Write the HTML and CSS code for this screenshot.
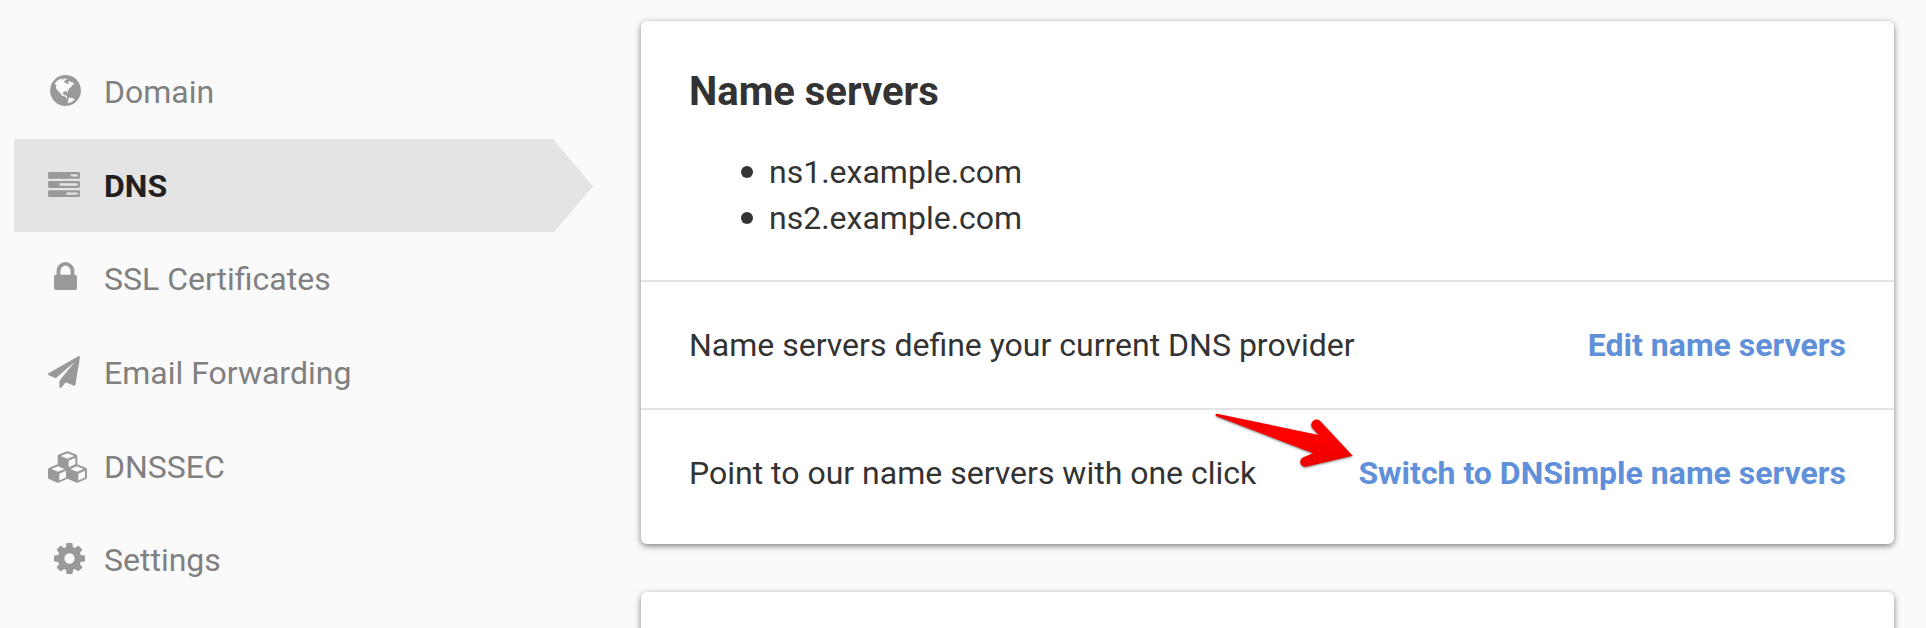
FILE: index.html
```html
<!DOCTYPE html>
<html lang="en">
<head>
<meta charset="utf-8">
<title>Name servers</title>
<link rel="stylesheet" href="styles.css">
</head>
<body>
<div class="page">
  <nav class="sidebar">
    <a class="item"><span class="slot"><svg class="icon globe" viewBox="128 128 1536 1536"><path d="M896 128q209 0 385.500 103t279.500 279.500 103 385.500-103 385.500-279.500 279.500-385.500 103-385.500-103-279.500-279.500-103-385.500 103-385.500 279.500-279.500 385.500-103zm274 521q-2 1-9.500 9.500t-13.500 9.500q2 0 4.500-5t5-11 3.500-7q6-7 22-15 14-6 52-12 34-8 51 11-2-2 9.500-13t14.500-12q3-2 15-4.500t15-7.500l2-22q-12 1-17.500-7t-6.500-21q0 2-6 8 0-7-4.500-8t-11.500 1-9 1q-10-3-15-7.500t-8-16.500-4-15q-2-5-9.500-11t-9.500-10q-1-2-2.500-5.500t-3-6.500-4-5.500-5.500-2.500-7 5-7.500 10-4.500 5q-3-2-6-1.500t-4.500 1-4.500 3-5 3.500q-3 2-8.500 3t-8.500 2q15-5-1-11-10-4-16-3 9-4 7.500-12t-8.500-14h5q-1-4-8.500-8.500t-17.500-8.500-13-6q-8-5-34-9.500t-33-.5q-5 6-4.500 10.500t4 14 3.500 12.500q1 6-5.500 13t-6.500 12q0 7 14 15.500t10 21.500q-3 8-16 16t-16 12q-5 8-1.500 18.500t10.500 16.500q2 2 1.500 4t-3.500 4.500-5.500 4-6.500 3.500l-3 2q-11 5-20.500-6t-13.500-26q-7-25-16-30-23-8-29 1-5-13-41-26-25-9-58-4 6-1 0-15-7-15-19-12 3-6 4-17.500t1-13.500q3-13 12-23 1-1 7-8.500t9.500-13.500.5-6q35 4 50-11 5-5 11.500-17t10.500-17q9-6 14-5.500t14.500 5.500 14.500 5q14 1 15.500-11t-7.500-20q12 1 3-17-4-7-8-9-12-4-27 5-8 4 2 8-1-1-9.500 10.500t-16.500 17.500-16-5q-1-1-5.500-13.500t-9.500-13.500q-8 0-16 15 3-8-11-15t-24-8q19-12-8-27-7-4-20.500-5t-19.500 4q-5 7-5.500 11.500t5 8 10.500 5.500 11.500 4 8.500 3q14 10 8 14-2 1-8.500 3.500t-11.500 4.500-6 4q-3 4 0 14t-2 14q-5-5-9-17.500t-7-16.500q7 9-25 6l-10-1q-4 0-16 2t-20.500 1-13.500-8q-4-8 0-20 1-4 4-2-4-3-11-9.500t-10-8.500q-46 15-94 41 6 1 12-1 5-2 13-6.500t10-5.500q34-14 42-7l5-5q14 16 20 25-7-4-30-1-20 6-22 12 7 12 5 18-4-3-11.500-10t-14.500-11-15-5q-16 0-22 1-146 80-235 222 7 7 12 8 4 1 5 9t2.500 11 11.500-3q9 8 3 19 1-1 44 27 19 17 21 21 3 11-10 18-1-2-9-9t-9-4q-3 5 .5 18.500t10.500 12.500q-7 0-9.500 16t-2.500 35.500-1 23.500l2 1q-3 12 5.500 34.500t21.500 19.500q-13 3 20 43 6 8 8 9 3 2 12 7.500t15 10 10 10.500q4 5 10 22.500t14 23.500q-2 6 9.500 20t10.500 23q-1 0-2.500 1t-2.500 1q3 7 15.500 14t15.500 13q1 3 2 10t3 11 8 2q2-20-24-62-15-25-17-29-3-5-5.500-15.500t-4.500-14.500q2 0 6 1.500t8.500 3.500 7.500 4 2 3q-3 7 2 17.500t12 18.500 17 19 12 13q6 6 14 19.500t0 13.500q9 0 20 10.500t17 19.500q5 8 8 26t5 24q2 7 8.500 13.500t12.500 9.500l16 8 13 7q5 2 18.500 10.500t21.500 11.500q10 4 16 4t14.500-2.500 13.500-3.500q15-2 29 15t21 21q36 19 55 11-2 1 .5 7.500t8 15.500 9 14.500 5.500 8.500q5 6 18 15t18 15q6-4 7-9-3 8 7 20t18 10q14-3 14-32-31 15-49-18 0-1-2.500-5.500t-4-8.500-2.500-8.500 0-7.500 5-3q9 0 10-3.500t-2-12.500-4-13q-1-8-11-20t-12-15q-5 9-16 8t-16-9q0 1-1.500 5.500t-1.500 6.500q-13 0-15-1 1-3 2.500-17.500t3.500-22.500q1-4 5.500-12t7.500-14.500 4-12.500-4.500-9.500-17.500-2.500q-19 1-26 20-1 3-3 10.500t-5 11.500-9 7q-7 3-24 2t-24-5q-13-8-22.500-29t-9.500-37q0-10 2.500-26.500t3-25-5.500-24.500q3-2 9-9.500t10-10.500q2-1 4.500-1.500t4.500 0 4-1.500 3-6q-1-1-4-3-3-3-4-3 7 3 28.500-1.500t27.500 1.500q15 11 22-2 0-1-2.500-9.500t-.5-13.500q5 27 29 9 3 3 15.500 5t17.500 5q3 2 7 5.500t5.500 4.500 5-.5 8.500-6.500q10 14 12 24 11 40 19 44 7 3 11 2t4.500-9.500 0-14-1.500-12.500l-1-8v-18l-1-8q-15-3-18.500-12t1.500-18.500 15-18.500q1-1 8-3.500t15.500-6.500 12.500-8q21-19 15-35 7 0 11-9-1 0-5-3t-7.500-5-4.500-2q9-5 2-16 5-3 7.500-11t7.500-10q9 12 21 2 7-8 1-16 5-7 20.500-10.500t18.500-9.500q7 2 8-2t1-12 3-12q4-5 15-9t13-5l17-11q3-4 0-4 18 2 31-11 10-11-6-20 3-6-3-9.500t-15-5.500q3-1 11.500-.5t10.500-1.500q15-10-7-16-17-5-43 12zm-163 877q206-36 351-189-3-3-12.500-4.500t-12.500-3.500q-18-7-24-8 1-7-2.500-13t-8-9-12.500-8-11-7q-2-2-7-6t-7-5.500-7.500-4.500-8.500-2-10 1l-3 1q-3 1-5.500 2.500t-5.500 3-4 3 0 2.500q-21-17-36-22-5-1-11-5.500t-10.500-7-10-1.500-11.500 7q-5 5-6 15t-2 13q-7-5 0-17.500t2-18.500q-3-6-10.500-4.500t-12 4.500-11.500 8.500-9 6.500-8.500 5.500-8.500 7.500q-3 4-6 12t-5 11q-2-4-11.500-6.500t-9.500-5.500q2 10 4 35t5 38q7 31-12 48-27 25-29 40-4 22 12 26 0 7-8 20.500t-7 21.500q0 6 2 16z"/></svg></span>Domain</a>
    <a class="item active"><span class="slot"><svg class="icon tasks" viewBox="0 128 1792 1408"><path d="M1024 1408h640v-128h-640v128zm-384-512h1024v-128h-1024v128zm640-512h384v-128h-384v128zm512 832v256q0 26-19 45t-45 19h-1664q-26 0-45-19t-19-45v-256q0-26 19-45t45-19h1664q26 0 45 19t19 45zm0-512v256q0 26-19 45t-45 19h-1664q-26 0-45-19t-19-45v-256q0-26 19-45t45-19h1664q26 0 45 19t19 45zm0-512v256q0 26-19 45t-45 19h-1664q-26 0-45-19t-19-45v-256q0-26 19-45t45-19h1664q26 0 45 19t19 45z"/></svg></span>DNS</a>
    <a class="item"><span class="slot"><svg class="icon lock" viewBox="320 128 1152 1408"><path d="M640 768h512v-192q0-106-75-181t-181-75-181 75-75 181v192zm832 96v576q0 40-28 68t-68 28h-960q-40 0-68-28t-28-68v-576q0-40 28-68t68-28h32v-192q0-184 132-316t316-132 316 132 132 316v192h32q40 0 68 28t28 68z"/></svg></span>SSL Certificates</a>
    <a class="item"><span class="slot"><svg class="icon plane" viewBox="0 0 1792 1792"><path d="M1764 11q33 24 27 64l-256 1536q-5 29-32 45-14 8-31 8-11 0-24-5l-453-185-242 295q-18 23-49 23-13 0-22-4-19-7-30.500-23.500t-11.500-36.500v-349l864-1059-1069 925-395-162q-37-14-40-55-2-40 32-59l1664-960q15-9 32-9 20 0 36 11z"/></svg></span>Email Forwarding</a>
    <a class="item"><span class="slot"><svg class="icon cubes" viewBox="0 0 117 95"><path fill-rule="evenodd" d="M58.500 0Q60 0 62 1L84 10Q88 12 88 16V39L113 49.500Q117 51.500 117 55V78Q117 82 113 84L90 94Q87 95.500 84 94L58.500 83L33 94Q30 95.500 27 94L4 84Q0 82 0 78V55Q0 51.500 4 49.500L29 39V16Q29 12 33 10L55 1Q57 0 58.500 0zM58.500 6L38 14.500L58.500 23L79 14.500zM62 29V48L82 39V20zM30 45L10 53.500L30 62L50 53.500zM34 68V88L54 79V59zM87 45L67 53.500L87 62L107 53.500zM91 68V88L111 79V59z"/></svg></span>DNSSEC</a>
    <a class="item"><span class="slot"><svg class="icon cog" viewBox="128 128 1536 1536"><path d="M1152 896q0-106-75-181t-181-75-181 75-75 181 75 181 181 75 181-75 75-181zm512-109v222q0 12-8 23t-20 13l-185 28q-19 54-39 91 35 50 107 138 10 12 10 25t-9 23q-27 37-99 108t-94 71q-12 0-26-9l-138-108q-44 23-91 38-16 136-29 186-7 28-36 28h-222q-14 0-24.500-8.500t-11.500-21.500l-28-184q-49-16-90-37l-141 107q-10 9-25 9-14 0-25-11-126-114-165-168-7-10-7-23 0-12 8-23 15-21 51-66.500t54-70.500q-27-50-41-99l-183-27q-13-2-21-12.500t-8-23.500v-222q0-12 8-23t19-13l186-28q14-46 39-92-40-57-107-138-10-12-10-24 0-10 9-23 26-36 98.500-107.500t94.500-71.500q13 0 26 10l138 107q44-23 91-38 16-136 29-186 7-28 36-28h222q14 0 24.500 8.500t11.500 21.500l28 184q49 16 90 37l142-107q9-9 24-9 13 0 25 10 129 119 165 170 7 8 7 22 0 12-8 23-15 21-51 66.500t-54 70.500q26 50 41 98l183 28q13 2 21 12.500t8 23.500z"/></svg></span>Settings</a>
  </nav>
  <main class="content">
    <section class="card">
      <div class="intro">
        <h2 class="title">Name servers</h2>
        <ul class="servers">
          <li class="server">ns1.example.com</li>
          <li class="server">ns2.example.com</li>
        </ul>
      </div>
      <div class="row"><span>Name servers define your current DNS provider</span><a class="link">Edit name servers</a></div>
      <div class="row"><span>Point to our name servers with one click</span><a class="link">Switch to DNSimple name servers</a>
        <svg class="arrow" viewBox="0 0 426 180">
          <defs><linearGradient id="red" x1="0" y1="0" x2="0.300" y2="1"><stop offset="0" stop-color="#f00000"/><stop offset="0.550" stop-color="#ff0000"/><stop offset="1" stop-color="#f00000"/></linearGradient></defs>
          <path fill="url(#red)" d="M12 5L317 69L297 47Q292 37 298 29Q307 18 321 26L419 131L279 164Q266 165 262 153Q261 141 271 136L300 124L9 12Q5 6 12 5Z"/>
        </svg>
      </div>
    </section>
    <section class="card next"></section>
  </main>
</div>
</body>
</html>
```
FILE: styles.css
```css
* { box-sizing: border-box; }

body {
  margin: 0;
  background: #fafafa;
  color: #333;
  font: 32px/46px Roboto, "Liberation Sans", sans-serif;
}

.page {
  display: flex;
  height: 628px;
  overflow: hidden;
}

.sidebar {
  width: 641px;
  flex: none;
  padding: 45.400px 48px 0 14px;
}

.item {
  display: flex;
  align-items: center;
  height: 93.600px;
  padding-left: 34px;
  color: #808080;
}

.item.active {
  background: #e4e4e4;
  color: #231f20;
  font-weight: 700;
  clip-path: polygon(0 0, 539px 0, 100% 47.500px, 540px 93px, 0 93px);
}

.slot {
  display: flex;
  width: 56px;
  flex: none;
}

.icon {
  display: block;
  fill: #999;
}

.globe { width: 31px; height: 31px; margin: 0 0 4px 2px; }
.tasks { width: 32px; height: 25px; margin-bottom: 2px; }
.lock { width: 23px; height: 28px; margin: 0 0 7px 6px; }
.plane { width: 32px; height: 32px; margin-bottom: 1px; }
.cubes { width: 39px; height: 32px; }
.cog { width: 31px; height: 31px; margin: 0 0 4px 6px; }

.content {
  width: 1253px;
  padding-top: 21px;
}

.card {
  height: 523px;
  background: #fff;
  border-radius: 6px;
  box-shadow: 0 2px 6px rgba(0, 0, 0, 0.5);
}

.card.next { margin-top: 48px; }

.intro {
  height: 259px;
  padding: 46px 48px 0;
}

.title {
  margin: 0;
  font-size: 40px;
  line-height: 50px;
}

.servers {
  margin: 32px 0 0;
  padding-left: 52px;
  list-style: none;
}

.server {
  display: flex;
  align-items: center;
  gap: 16px;
}

.server::before {
  content: "";
  width: 12px;
  height: 12px;
  border-radius: 50%;
  background: #333;
}

.row {
  position: relative;
  display: flex;
  justify-content: space-between;
  align-items: center;
  height: 128px;
  padding: 0 48px;
  border-top: 2px solid #e4e4e4;
}

.link {
  color: #5f90d9;
  font-weight: 700;
}

.arrow {
  position: absolute;
  left: 572px;
  top: 2px;
  width: 142px;
  height: 60px;
  overflow: visible;
  filter: drop-shadow(0 1px 1px rgba(0, 0, 0, 0.5));
}
```
